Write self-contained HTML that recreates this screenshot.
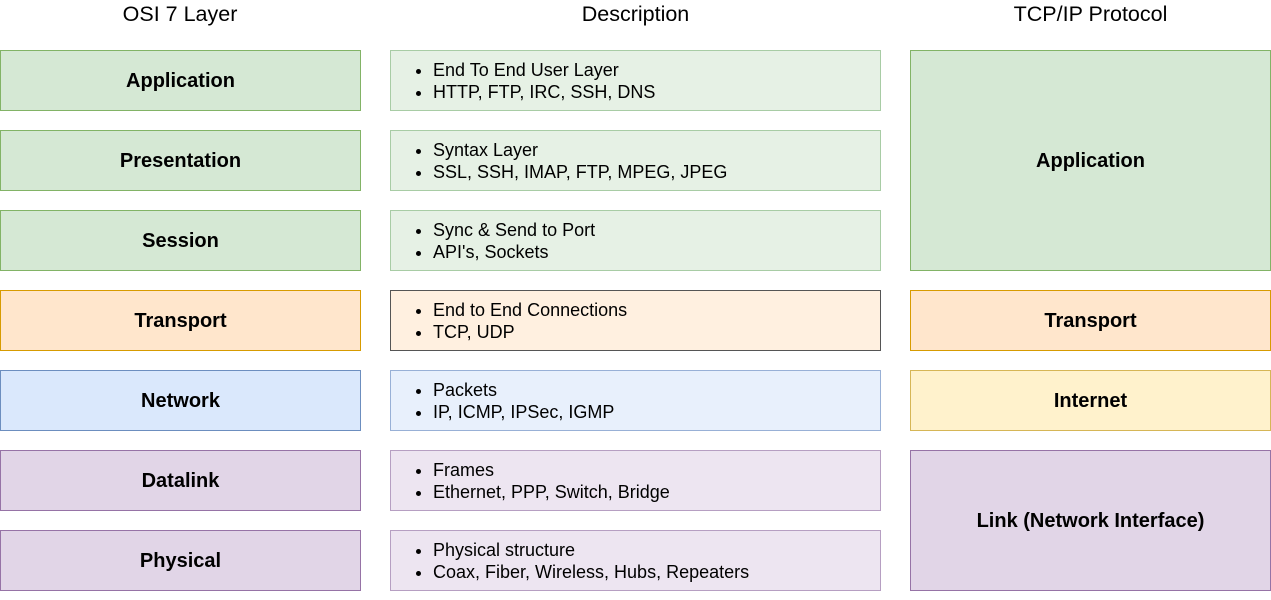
<!DOCTYPE html><html><head><style>
body{margin:0;width:1271px;height:600px;background:#fff;font-family:"Liberation Sans",sans-serif;position:relative;overflow:hidden}
.b{position:absolute;box-sizing:border-box;border:1px solid;display:flex;align-items:center;justify-content:center;font-weight:bold;font-size:20px;color:#000;padding-top:2px}
.h{position:absolute;top:2px;font-size:21.5px;text-align:center}
.d{position:absolute;box-sizing:border-box;border:1px solid;left:390px;width:491px;height:61px;font-size:18px;padding:8px 0 0 42px;line-height:22px}
.d div{position:relative}.d div:before{content:"";position:absolute;left:-17px;top:10px;width:5px;height:5px;border-radius:50%;background:#000}
.g{background:#d5e8d4;border-color:#82b366}.o{background:#ffe6cc;border-color:#d79b00}.bl{background:#dae8fc;border-color:#6c8ebf}.p{background:#e1d5e7;border-color:#9673a6}.y{background:#fff2cc;border-color:#d6b656}
</style></head><body>
<div class="h" style="left:0;width:360px">OSI 7 Layer</div>
<div class="h" style="left:390px;width:491px">Description</div>
<div class="h" style="left:910px;width:361px">TCP/IP Protocol</div>
<div class="b g" style="left:0;top:50px;width:361px;height:61px">Application</div>
<div class="b g" style="left:0;top:130px;width:361px;height:61px">Presentation</div>
<div class="b g" style="left:0;top:210px;width:361px;height:61px">Session</div>
<div class="b o" style="left:0;top:290px;width:361px;height:61px">Transport</div>
<div class="b bl" style="left:0;top:370px;width:361px;height:61px">Network</div>
<div class="b p" style="left:0;top:450px;width:361px;height:61px">Datalink</div>
<div class="b p" style="left:0;top:530px;width:361px;height:61px">Physical</div>
<div class="d" style="top:50px;background:#e6f1e5;border-color:#a8cca5"><div>End To End User Layer</div><div>HTTP, FTP, IRC, SSH, DNS</div></div>
<div class="d" style="top:130px;background:#e6f1e5;border-color:#a8cca5"><div>Syntax Layer</div><div>SSL, SSH, IMAP, FTP, MPEG, JPEG</div></div>
<div class="d" style="top:210px;background:#e6f1e5;border-color:#a8cca5"><div>Sync &amp; Send to Port</div><div>API's, Sockets</div></div>
<div class="d" style="top:290px;background:#fff0e0;border-color:#555"><div>End to End Connections</div><div>TCP, UDP</div></div>
<div class="d" style="top:370px;background:#e8f0fc;border-color:#98b0d6"><div>Packets</div><div>IP, ICMP, IPSec, IGMP</div></div>
<div class="d" style="top:450px;background:#ede5f1;border-color:#b69fc2"><div>Frames</div><div>Ethernet, PPP, Switch, Bridge</div></div>
<div class="d" style="top:530px;background:#ede5f1;border-color:#b69fc2"><div>Physical structure</div><div>Coax, Fiber, Wireless, Hubs, Repeaters</div></div>
<div class="b g" style="left:910px;top:50px;width:361px;height:221px">Application</div>
<div class="b o" style="left:910px;top:290px;width:361px;height:61px">Transport</div>
<div class="b y" style="left:910px;top:370px;width:361px;height:61px">Internet</div>
<div class="b p" style="left:910px;top:450px;width:361px;height:141px">Link (Network Interface)</div>
</body></html>
